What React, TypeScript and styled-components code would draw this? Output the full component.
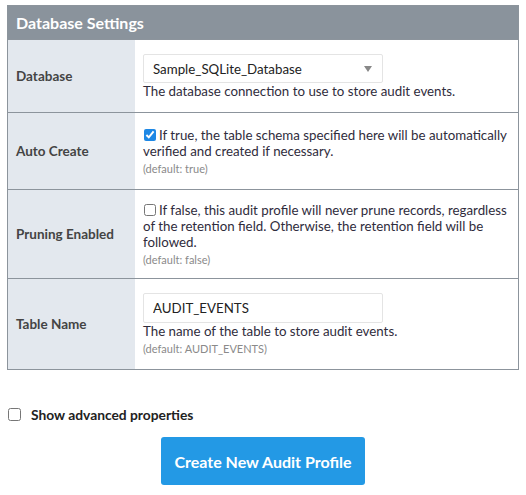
import { useState } from 'react'
import styled, { createGlobalStyle } from 'styled-components'

const GlobalStyle = createGlobalStyle`
  body {
    margin: 0;
    background: #fff;
    font-family: Lato, "Liberation Sans", sans-serif;
    color: #333;
  }
`

const Page = styled.div`
  padding: 5px 7px 0 7px;
  width: 512px;
`

const SettingsTable = styled.table`
  width: 512px;
  border-collapse: collapse;
  border: 1px solid #8c949c;
`

const HeaderCell = styled.th`
  background: #8a939c;
  color: #fff;
  font-size: 16px;
  font-weight: 700;
  text-align: left;
  height: 33px;
  padding: 0 8px;
`

const Row = styled.tr`
  border-top: 1px solid #8c949c;
`

const LabelCell = styled.td`
  width: 111px;
  background: #e3e8ee;
  color: #444;
  font-size: 13.5px;
  font-weight: 700;
  padding: 0 8px;
  vertical-align: middle;
`

const ValueCell = styled.td<{ $top?: number; $bottom?: number }>`
  padding: ${p => p.$top ?? 14}px 8px ${p => p.$bottom ?? 14}px 8px;
  vertical-align: middle;
  font-size: 13.3px;
  line-height: 16px;
`

const SelectBox = styled.div`
  position: relative;
  width: 240px;
  height: 29px;
  box-sizing: border-box;
  border: 1px solid #e4e4e4;
  border-radius: 2px;
  background: #fff;
  display: flex;
  align-items: center;
  padding-left: 9px;
  font-size: 13.3px;
  color: #222;

  &::after {
    content: '';
    position: absolute;
    right: 10px;
    top: 11px;
    border-left: 4px solid transparent;
    border-right: 4px solid transparent;
    border-top: 6px solid #888;
  }
`

const TextInput = styled.input`
  width: 240px;
  height: 30px;
  box-sizing: border-box;
  border: 1px solid #e4e4e4;
  border-radius: 2px;
  padding: 0 9px;
  font-family: inherit;
  font-size: 13.3px;
  color: #222;
  outline: none;
  display: block;
`

const Description = styled.div`
  color: #2f2c3c;
`

const CheckLine = styled.label`
  color: #2f2c3c;
  display: block;
`

const Check = styled.input`
  width: 12px;
  height: 12px;
  margin: 0 3px 0 1px;
  vertical-align: -1px;
  accent-color: #1e88e5;
`

const DefaultNote = styled.div`
  color: #8a8a8a;
  font-size: 11px;
  line-height: 13px;
  margin-top: 3px;
`

const AdvancedRow = styled.label`
  display: flex;
  align-items: center;
  gap: 10px;
  margin-top: 36px;
  font-size: 13.8px;
  font-weight: 700;
  color: #222;
`

const AdvancedCheck = styled.input`
  width: 13px;
  height: 13px;
  margin: 0 0 0 1px;
`

const Actions = styled.div`
  display: flex;
  justify-content: center;
  margin-top: 14px;
`

const PrimaryButton = styled.button`
  width: 204px;
  height: 48px;
  border: none;
  border-radius: 3px;
  background: #2399e5;
  color: #fff;
  font-family: inherit;
  font-size: 16px;
  font-weight: 700;
  cursor: pointer;
`

export default function App() {
  const [autoCreate, setAutoCreate] = useState(true)
  const [pruning, setPruning] = useState(false)
  const [advanced, setAdvanced] = useState(false)
  const [tableName, setTableName] = useState('AUDIT_EVENTS')

  return (
    <Page>
      <GlobalStyle />
      <SettingsTable>
        <thead>
          <tr>
            <HeaderCell colSpan={2}>Database Settings</HeaderCell>
          </tr>
        </thead>
        <tbody>
          <Row>
            <LabelCell>Database</LabelCell>
            <ValueCell $top={14} $bottom={13}>
              <SelectBox>Sample_SQLite_Database</SelectBox>
              <Description>The database connection to use to store audit events.</Description>
            </ValueCell>
          </Row>
          <Row>
            <LabelCell>Auto Create</LabelCell>
            <ValueCell>
              <CheckLine>
                <Check type="checkbox" checked={autoCreate} onChange={e => setAutoCreate(e.target.checked)} />
                If true, the table schema specified here will be automatically verified and created if necessary.
              </CheckLine>
              <DefaultNote>(default: true)</DefaultNote>
            </ValueCell>
          </Row>
          <Row>
            <LabelCell>Pruning Enabled</LabelCell>
            <ValueCell $top={12} $bottom={12}>
              <CheckLine>
                <Check type="checkbox" checked={pruning} onChange={e => setPruning(e.target.checked)} />
                If false, this audit profile will never prune records, regardless of the retention field. Otherwise, the retention field will be followed.
              </CheckLine>
              <DefaultNote>(default: false)</DefaultNote>
            </ValueCell>
          </Row>
          <Row>
            <LabelCell>Table Name</LabelCell>
            <ValueCell>
              <TextInput value={tableName} onChange={e => setTableName(e.target.value)} />
              <Description>The name of the table to store audit events.</Description>
              <DefaultNote>(default: AUDIT_EVENTS)</DefaultNote>
            </ValueCell>
          </Row>
        </tbody>
      </SettingsTable>
      <AdvancedRow>
        <AdvancedCheck type="checkbox" checked={advanced} onChange={e => setAdvanced(e.target.checked)} />
        Show advanced properties
      </AdvancedRow>
      <Actions>
        <PrimaryButton>Create New Audit Profile</PrimaryButton>
      </Actions>
    </Page>
  )
}
